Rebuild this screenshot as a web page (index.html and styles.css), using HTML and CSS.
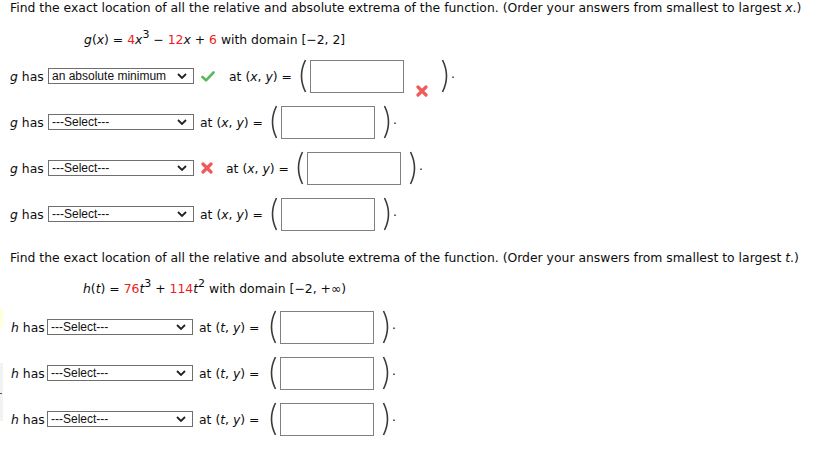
FILE: index.html
```html
<!DOCTYPE html>
<html>
<head>
<meta charset="utf-8">
<link rel="stylesheet" href="styles.css">
</head>
<body>
<div class="page">
  <p class="prompt">Find the exact location of all the relative and absolute extrema of the function. (Order your answers from smallest to largest <i>x</i>.)</p>
  <p class="formula"><i>g</i>(<i>x</i>) = <span class="red">4</span><i>x</i><sup>3</sup> &minus; <span class="red">12</span><i>x</i> + <span class="red">6</span> with domain [&minus;2, 2]</p>

  <div class="row">
    <span class="lbl"><i>g</i> has</span>
    <div class="sel"><span>an absolute minimum</span><svg class="chev" width="10" height="6" viewBox="0 0 10 6"><path d="M1 1 L5 5 L9 1" fill="none" stroke="#222" stroke-width="1.8"/></svg></div>
    <svg class="mark check" width="14" height="11" viewBox="0 0 14 11"><path d="M1.5 6 L5 9.3 L12.5 1.5" fill="none" stroke="#5cb85c" stroke-width="2.6" stroke-linecap="round" stroke-linejoin="round"/></svg>
    <span class="at at-mark">at (<i>x</i>, <i>y</i>) =</span>
    <svg class="paren" width="10" height="34" viewBox="0 0 10 34"><path d="M8.5 1 Q0.5 17 8.5 33" fill="none" stroke="#3a3a3a" stroke-width="1.6"/></svg>
    <div class="box"></div>
    <svg class="mark xm low" width="12" height="12" viewBox="0 0 12 12"><path d="M2 2 L10 10 M10 2 L2 10" stroke="#f05a5a" stroke-width="3.2" stroke-linecap="round"/></svg>
    <svg class="paren close wide" width="10" height="34" viewBox="0 0 10 34"><path d="M1.5 1 Q9.5 17 1.5 33" fill="none" stroke="#3a3a3a" stroke-width="1.6"/></svg>
    <span class="dot">.</span>
  </div>

  <div class="row">
    <span class="lbl"><i>g</i> has</span>
    <div class="sel"><span>---Select---</span><svg class="chev" width="10" height="6" viewBox="0 0 10 6"><path d="M1 1 L5 5 L9 1" fill="none" stroke="#222" stroke-width="1.8"/></svg></div>
    <span class="at">at (<i>x</i>, <i>y</i>) =</span>
    <svg class="paren" width="10" height="34" viewBox="0 0 10 34"><path d="M8.5 1 Q0.5 17 8.5 33" fill="none" stroke="#3a3a3a" stroke-width="1.6"/></svg>
    <div class="box"></div>
    <svg class="paren close" width="10" height="34" viewBox="0 0 10 34"><path d="M1.5 1 Q9.5 17 1.5 33" fill="none" stroke="#3a3a3a" stroke-width="1.6"/></svg>
    <span class="dot">.</span>
  </div>

  <div class="row">
    <span class="lbl"><i>g</i> has</span>
    <div class="sel"><span>---Select---</span><svg class="chev" width="10" height="6" viewBox="0 0 10 6"><path d="M1 1 L5 5 L9 1" fill="none" stroke="#222" stroke-width="1.8"/></svg></div>
    <svg class="mark xm" width="12" height="12" viewBox="0 0 12 12"><path d="M2 2 L10 10 M10 2 L2 10" stroke="#f05a5a" stroke-width="3.2" stroke-linecap="round"/></svg>
    <span class="at at-x">at (<i>x</i>, <i>y</i>) =</span>
    <svg class="paren" width="10" height="34" viewBox="0 0 10 34"><path d="M8.5 1 Q0.5 17 8.5 33" fill="none" stroke="#3a3a3a" stroke-width="1.6"/></svg>
    <div class="box"></div>
    <svg class="paren close" width="10" height="34" viewBox="0 0 10 34"><path d="M1.5 1 Q9.5 17 1.5 33" fill="none" stroke="#3a3a3a" stroke-width="1.6"/></svg>
    <span class="dot">.</span>
  </div>

  <div class="row">
    <span class="lbl"><i>g</i> has</span>
    <div class="sel"><span>---Select---</span><svg class="chev" width="10" height="6" viewBox="0 0 10 6"><path d="M1 1 L5 5 L9 1" fill="none" stroke="#222" stroke-width="1.8"/></svg></div>
    <span class="at">at (<i>x</i>, <i>y</i>) =</span>
    <svg class="paren" width="10" height="34" viewBox="0 0 10 34"><path d="M8.5 1 Q0.5 17 8.5 33" fill="none" stroke="#3a3a3a" stroke-width="1.6"/></svg>
    <div class="box"></div>
    <svg class="paren close" width="10" height="34" viewBox="0 0 10 34"><path d="M1.5 1 Q9.5 17 1.5 33" fill="none" stroke="#3a3a3a" stroke-width="1.6"/></svg>
    <span class="dot">.</span>
  </div>

  <p class="prompt second">Find the exact location of all the relative and absolute extrema of the function. (Order your answers from smallest to largest <i>t</i>.)</p>
  <p class="formula f2"><i>h</i>(<i>t</i>) = <span class="red">76</span><i>t</i><sup>3</sup> + <span class="red">114</span><i>t</i><sup>2</sup> with domain [&minus;2, +&infin;)</p>

  <div class="row hrow yellow">
    <span class="lbl"><i>h</i> has</span>
    <div class="sel"><span>---Select---</span><svg class="chev" width="10" height="6" viewBox="0 0 10 6"><path d="M1 1 L5 5 L9 1" fill="none" stroke="#222" stroke-width="1.8"/></svg></div>
    <span class="at">at (<i>t</i>, <i>y</i>) =</span>
    <svg class="paren" width="10" height="34" viewBox="0 0 10 34"><path d="M8.5 1 Q0.5 17 8.5 33" fill="none" stroke="#3a3a3a" stroke-width="1.6"/></svg>
    <div class="box"></div>
    <svg class="paren close" width="10" height="34" viewBox="0 0 10 34"><path d="M1.5 1 Q9.5 17 1.5 33" fill="none" stroke="#3a3a3a" stroke-width="1.6"/></svg>
    <span class="dot">.</span>
  </div>

  <div class="row hrow gray">
    <span class="lbl"><i>h</i> has</span>
    <div class="sel"><span>---Select---</span><svg class="chev" width="10" height="6" viewBox="0 0 10 6"><path d="M1 1 L5 5 L9 1" fill="none" stroke="#222" stroke-width="1.8"/></svg></div>
    <span class="at">at (<i>t</i>, <i>y</i>) =</span>
    <svg class="paren" width="10" height="34" viewBox="0 0 10 34"><path d="M8.5 1 Q0.5 17 8.5 33" fill="none" stroke="#3a3a3a" stroke-width="1.6"/></svg>
    <div class="box"></div>
    <svg class="paren close" width="10" height="34" viewBox="0 0 10 34"><path d="M1.5 1 Q9.5 17 1.5 33" fill="none" stroke="#3a3a3a" stroke-width="1.6"/></svg>
    <span class="dot">.</span>
  </div>

  <div class="row hrow gray2">
    <span class="lbl"><i>h</i> has</span>
    <div class="sel"><span>---Select---</span><svg class="chev" width="10" height="6" viewBox="0 0 10 6"><path d="M1 1 L5 5 L9 1" fill="none" stroke="#222" stroke-width="1.8"/></svg></div>
    <span class="at">at (<i>t</i>, <i>y</i>) =</span>
    <svg class="paren" width="10" height="34" viewBox="0 0 10 34"><path d="M8.5 1 Q0.5 17 8.5 33" fill="none" stroke="#3a3a3a" stroke-width="1.6"/></svg>
    <div class="box"></div>
    <svg class="paren close" width="10" height="34" viewBox="0 0 10 34"><path d="M1.5 1 Q9.5 17 1.5 33" fill="none" stroke="#3a3a3a" stroke-width="1.6"/></svg>
    <span class="dot">.</span>
  </div>
</div>
</body>
</html>
```

FILE: styles.css
```css
html, body {
  margin: 0;
  padding: 0;
  background: #fff;
}
body {
  font-family: "DejaVu Sans", Verdana, sans-serif;
  font-size: 12.4px;
  color: #0d0d0d;
}
.page {
  padding-left: 10px;
  width: 810px;
}
p {
  margin: 0;
}
.prompt {
  height: 16px;
  line-height: 16px;
}
.formula {
  margin-top: 14px;
  margin-left: 74px;
  height: 20px;
  line-height: 20px;
  margin-bottom: 3px;
}
.f2 {
  margin-left: 73px;
  margin-top: 13px;
  margin-bottom: 5px;
}
.second {
  margin-top: 13px;
}
.red {
  color: #ee1c1c;
}
sup {
  font-size: 11px;
  line-height: 0;
  vertical-align: 0;
  position: relative;
  top: -6px;
}
.row {
  display: flex;
  align-items: center;
  height: 46px;
  position: relative;
}
.lbl {
  width: 34px;
  margin-right: 4px;
  white-space: nowrap;
}
.hrow .lbl {
  width: 33px;
  margin-left: 1px;
  margin-right: 3px;
}
.sel {
  box-sizing: border-box;
  width: 146px;
  height: 16px;
  border: 1px solid #6f6f6f;
  background: #fff;
  display: flex;
  align-items: center;
  justify-content: space-between;
  padding: 0 6px 0 3px;
  font-family: "Liberation Sans", Arial, sans-serif;
  font-size: 12px;
  color: #111;
}
.chev {
  flex: none;
}
.at {
  margin-left: 6px;
  width: 63px;
  white-space: nowrap;
}
.mark {
  flex: none;
}
.check {
  margin-left: 7px;
}
.at-mark {
  margin-left: 14px;
}
.xm {
  margin-left: 7px;
}
.at-x {
  margin-left: 13px;
}
.paren {
  flex: none;
  margin-left: 5px;
}
.paren.close {
  margin-left: 8px;
}
.paren.close.wide {
  margin-left: 13px;
}
.xm.low {
  align-self: flex-end;
  margin-bottom: 2px;
  margin-left: 12px;
}
.box {
  box-sizing: border-box;
  width: 94px;
  height: 33px;
  border: 1px solid #808080;
  margin-left: 3px;
  background: #fff;
}
.dot {
  margin-left: 0;
  position: relative;
  top: -3px;
}
.yellow::before {
  content: "";
  position: absolute;
  left: -10px;
  top: 5px;
  width: 3px;
  height: 18px;
  background: #ffffd8;
}
.gray::before {
  content: "";
  position: absolute;
  left: -10px;
  top: 13px;
  width: 3px;
  height: 33px;
  background: #f2f2f2;
}
.gray::after {
  content: "";
  position: absolute;
  left: -10px;
  top: 43px;
  width: 2px;
  height: 1px;
  background: #555;
}
.gray2::before {
  content: "";
  position: absolute;
  left: -10px;
  top: 0;
  width: 3px;
  height: 25px;
  background: #f2f2f2;
}
```
